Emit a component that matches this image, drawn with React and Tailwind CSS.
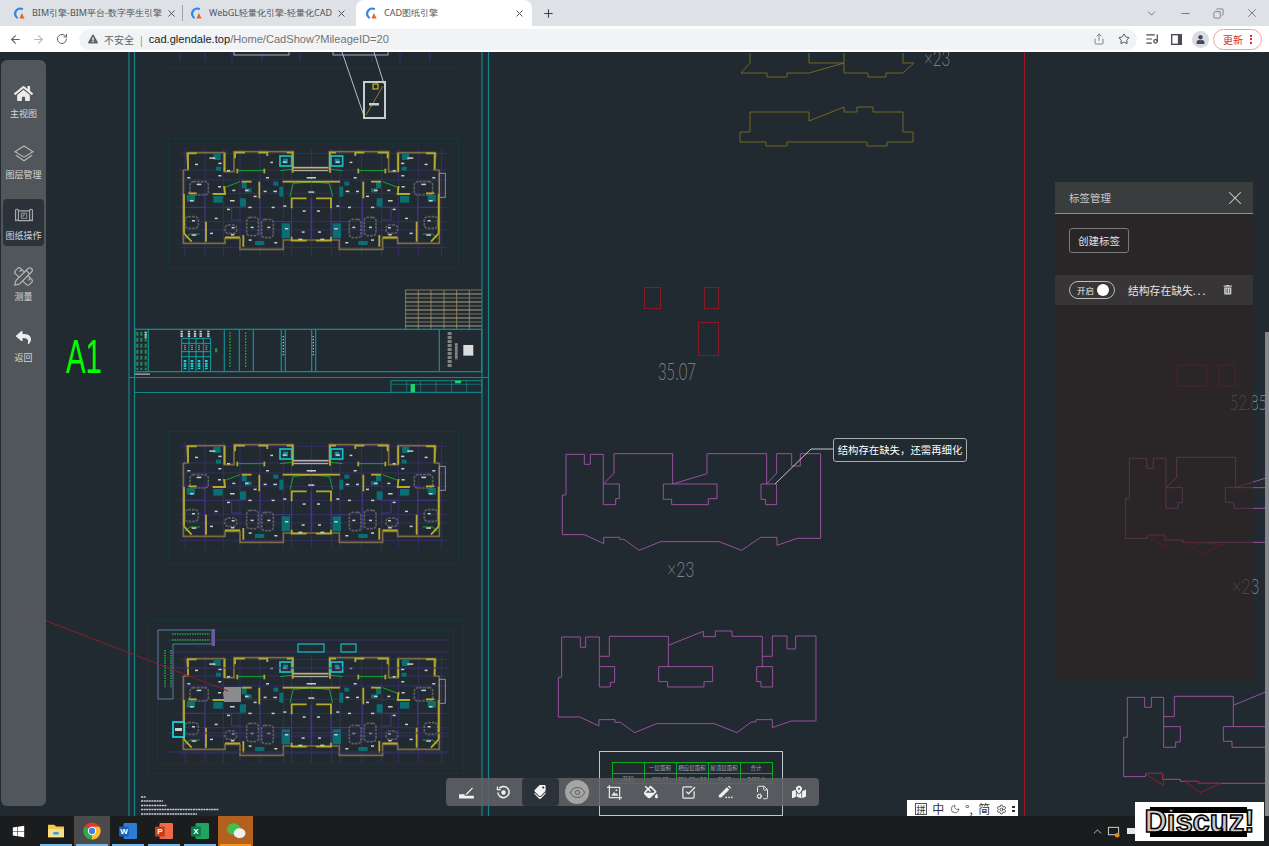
import { ArrowLeft, ArrowRight, RotateCw, Star, ChevronDown, ChevronUp, Minus, X, Copy, Plus, ListMusic, PencilRuler, SquareCheckBig, FileCog, Eye, Share, Moon, Settings } from 'lucide-react';
import { FaHome, FaReply, FaTags, FaFillDrip, FaMapMarkedAlt, FaTrashAlt, FaExclamationTriangle, FaUser, FaWindows } from 'react-icons/fa';

const cjk = '"Noto Sans CJK SC", "Liberation Sans", sans-serif';

// floor plan data, left half only, mirrored around x = 1088
const gridX = [165, 225, 280, 330, 390, 460, 485, 545, 605, 630, 695, 755, 805, 865, 935];
const gridY = [70, 120, 150, 190, 232, 275, 300, 352];
const brown = ['170,68 285,68 285,125 312,125 312,65 490,65 490,115 544,115', '160,120 175,120 170,68', '160,120 160,340 285,340 285,325 330,325 330,358 460,358 460,330 544,330'];
const walls = ['225,190 225,340', '305,232 305,270 335,270', '390,205 390,320', '485,235 485,320', '545,205 545,330', '285,232 340,232', '430,275 485,275', '160,232 225,232'];
const yellow = [
  '174,118 174,70 200,70', '283,70 283,125', '315,85 315,68 345,68', '385,68 412,68 412,78', '470,68 488,68 488,128',
  '162,192 162,310', '162,310 185,335', '248,192 285,192 282,168', '175,190 200,190', '228,275 228,335',
  '388,155 388,205', '335,155 365,155', '458,155 544,155', '485,235 485,205 530,205', '285,322 330,322',
  '322,116 322,130', '403,116 403,130', '485,320 485,332 530,332', '340,315 340,350',
];
const teal = [[250, 72, 22, 18], [258, 110, 15, 12], [170, 195, 25, 20], [250, 198, 28, 20], [335, 155, 15, 20], [330, 205, 18, 25], [345, 175, 20, 12], [430, 155, 15, 12], [448, 170, 12, 30], [455, 280, 25, 45], [375, 333, 28, 12]];
const green = ['285,195 285,172 330,155', '480,200 490,160 544,156', '325,122 400,122', '165,325 180,312 210,312', '450,122 485,118'];
const furniture = [[180, 155, 55, 40], [350, 262, 35, 55], [395, 268, 35, 55], [285, 285, 35, 25], [165, 260, 40, 35]];
const labels = [[195, 101, 9], [238, 82, 18], [265, 98, 10], [291, 120, 9], [421, 95, 8], [458, 94, 12], [265, 135, 9], [172, 141, 9], [200, 161, 14], [264, 168, 9], [307, 179, 9], [345, 179, 11], [401, 182, 9], [430, 182, 11], [371, 197, 9], [300, 210, 14], [355, 230, 10], [291, 236, 9], [425, 230, 9], [460, 226, 9], [518, 241, 9], [180, 210, 11], [254, 263, 9], [186, 270, 9], [305, 291, 9], [362, 290, 9], [412, 290, 9], [515, 304, 9], [356, 328, 9], [433, 336, 9], [303, 312, 10], [240, 308, 9], [185, 313, 14], [408, 141, 9], [530, 141, 16], [535, 184, 9], [465, 294, 10], [505, 326, 12]];

function PlanHalf() {
  return (
    <g>
      {walls.map(p => <polyline key={p} points={p} fill="none" stroke="#43368a" strokeWidth="3" />)}
      {brown.map(p => <polyline key={p} points={p} fill="none" stroke="#7d6c42" strokeWidth="5" />)}
      {teal.map(([x, y, w, h]) => <rect key={`${x}-${y}`} x={x} y={y} width={w} height={h} fill="#0b6f72" />)}
      {furniture.map(([x, y, w, h]) => <rect key={`${x}-${y}`} x={x} y={y} width={w} height={h} rx="10" fill="none" stroke="#5d5f61" strokeWidth="5" strokeDasharray="8 3" />)}
      {green.map(p => <polyline key={p} points={p} fill="none" stroke="#16a32e" strokeWidth="3" />)}
      {yellow.map(p => <polyline key={p} points={p} fill="none" stroke="#b5aa2c" strokeWidth="5.5" />)}
      <rect x="450" y="78" width="35" height="30" fill="none" stroke="#12c4c4" strokeWidth="5" />
      <rect x="460" y="86" width="14" height="14" fill="#0b8f92" />
      {labels.map(([x, y, w]) => <rect key={`${x}-${y}`} x={x} y={y} width={w} height="4.5" fill="#c9cdd0" />)}
    </g>
  );
}

function FloorPlan({ dy }) {
  return (
    <g transform={`translate(130 ${130 + dy}) scale(0.3333)`}>
      {gridX.map(x => <line key={x} x1={x} x2={x} y1="55" y2="380" stroke="#3b2f70" strokeWidth="2.5" />)}
      {gridY.map(y => <line key={y} y1={y} y2={y} x1="148" x2="952" stroke="#3b2f70" strokeWidth="2.5" />)}
      <PlanHalf />
      <g transform="translate(1088 0) scale(-1 1)"><PlanHalf /></g>
      <polyline points="490,112 595,112" stroke="#c4c7c9" strokeWidth="3" />
      <polyline points="490,122 595,122" stroke="#c4c7c9" strokeWidth="3" />
      <rect x="928" y="130" width="18" height="72" fill="none" stroke="#8b8fa8" strokeWidth="3" />
    </g>
  );
}

// title block of the sheet, in the same coords as FloorPlan
function TitleBlock() {
  const cols = [55, 283, 328, 370, 454, 466, 545, 557, 928];
  const tableX = [827, 865, 903, 942, 980, 1018];
  const tableY = [480, 492, 504, 516, 528, 540, 552, 564, 576, 588];
  return (
    <g transform="translate(130 130) scale(0.3333)">
      {tableX.map(x => <line key={x} x1={x} x2={x} y1="480" y2="598" stroke="#8a7a50" strokeWidth="3" />)}
      {tableY.map((y, i) => <line key={y} x1="827" x2="1055" y1={y} y2={y} stroke={i % 2 ? '#a9a48e' : '#8a7a50'} strokeWidth="3" />)}
      <rect x="15" y="598" width="1040" height="127" fill="none" stroke="#12888c" strokeWidth="4" />
      {cols.map(x => <line key={x} x1={x} x2={x} y1="598" y2="725" stroke="#12888c" strokeWidth="4" />)}
      {[155, 177, 198, 220, 242].map(x => <line key={x} x1={x} x2={x} y1="625" y2="725" stroke="#12a3a8" strokeWidth="3" />)}
      {[625, 640, 665, 680].map(y => <line key={y} x1="155" x2="242" y1={y} y2={y} stroke="#12a3a8" strokeWidth="3" />)}
      {[165, 186, 207, 229].map(x => <line key={x} x1={x} x2={x} y1="690" y2="718" stroke="#14d6dc" strokeWidth="8" strokeDasharray="6 2" />)}
      {[155, 177, 195, 212, 235].map(x => <line key={x} x1={x} x2={x} y1="602" y2="622" stroke="#c9cdd0" strokeWidth="7" strokeDasharray="5 2" />)}
      {[165, 186, 207, 229].map(x => <line key={x} x1={x} x2={x} y1="645" y2="660" stroke="#5f8f92" strokeWidth="6" strokeDasharray="4 2" />)}
      {[300, 347].map(x => <line key={x} x1={x} x2={x} y1="606" y2="711" stroke="#159c38" strokeWidth="4" strokeDasharray="6 3" />)}
      <rect x="255" y="655" width="7" height="12" fill="#159c38" />
      {[22, 34, 47].map(x => <line key={x} x1={x} x2={x} y1="605" y2="720" stroke="#1c8f58" strokeWidth="6" strokeDasharray="12 6" />)}
      <line x1="47" x2="47" y1="605" y2="625" stroke="#c9cdd0" strokeWidth="6" strokeDasharray="5 2" />
      {[460, 550].map(x => <line key={x} x1={x} x2={x} y1="618" y2="678" stroke="#b9bdc0" strokeWidth="4" strokeDasharray="4 5" />)}
      <line x1="959" x2="959" y1="606" y2="714" stroke="#7f8487" strokeWidth="12" strokeDasharray="9 3" />
      <line x1="979" x2="979" y1="640" y2="688" stroke="#8d9193" strokeWidth="8" strokeDasharray="7 2" />
      <rect x="1000" y="645" width="30" height="32" fill="#d9dbdd" />
      <rect x="15" y="730" width="45" height="5" fill="#8f9397" />
      {/* next sheet title */}
      <rect x="783" y="752" width="272" height="35" fill="none" stroke="#12888c" strokeWidth="3" />
      {[830, 872, 918, 965, 1010].map(x => <line key={x} x1={x} x2={x} y1="752" y2="787" stroke="#12888c" strokeWidth="2" />)}
      <line x1="783" x2="1055" y1="763" y2="763" stroke="#12888c" strokeWidth="2" />
      <rect x="842" y="762" width="13" height="25" fill="#1ad66a" />
      <rect x="975" y="752" width="18" height="8" fill="#1ad66a" />
    </g>
  );
}

function CadText({ x, y, size = 24, sx = 0.62, children }) {
  return <text transform={`translate(${x} ${y}) scale(${sx} 1)`} fontSize={size}>{children}</text>;
}

function CadCanvas() {
  return (
    <svg viewBox="0 52 1269 764" className="absolute inset-0 w-full h-full">
      {/* sheets */}
      <g stroke="#12888c" strokeWidth="1.2" fill="none">
        <line x1="129" x2="129" y1="52" y2="816" />
        <line x1="134.5" x2="134.5" y1="52" y2="816" />
        <line x1="482" x2="482" y1="52" y2="816" />
        <line x1="488.5" x2="488.5" y1="52" y2="816" />
        <line x1="129" x2="489" y1="377.5" y2="377.5" />
        <line x1="134" x2="482" y1="392.5" y2="392.5" />
      </g>
      <g stroke="#17353a" fill="none">
        <path d="M165 52V67.5H458V52" />
        <rect x="168.5" y="138.5" width="290" height="129" />
        <rect x="168.5" y="431.5" width="290" height="132" />
        <rect x="147.5" y="620.5" width="316" height="153" />
        <rect x="157.5" y="630.5" width="296" height="133" />
      </g>
      {[180, 205, 232, 262, 300, 340, 372, 400, 430].map(x => <line key={x} x1={x} x2={x} y1="52" y2="62" stroke="#3b2f70" />)}
      <rect x="234" y="50" width="55" height="5" fill="none" stroke="#a9adb0" />
      <rect x="333" y="50" width="55" height="5" fill="none" stroke="#a9adb0" />
      <path d="M342 52L364 116M374 52L384 84" stroke="#b9bdc0" fill="none" />
      <rect x="364" y="82" width="21" height="36" fill="none" stroke="#c9cccf" strokeWidth="2" />
      <path d="M366 115L383 86" stroke="#8a7a30" />
      <rect x="373" y="84" width="5" height="5" fill="none" stroke="#e0d418" />
      <rect x="369" y="103" width="10" height="2.5" fill="#c9cdd0" />

      <FloorPlan dy={0} />
      <FloorPlan dy={293} />
      <FloorPlan dy={506} />
      <TitleBlock />

      {/* third plan extras */}
      {[640, 652, 668, 733, 752].map(y => <line key={y} x1="168" x2="449" y1={y} y2={y} stroke="#3b2f70" />)}
      <path d="M158 630H212V644H173V699H158Z" fill="none" stroke="#5d7aa0" />
      <path d="M172 634H210M172 640H210M165 650V688M171 650V688" stroke="#1f8a3a" strokeWidth="2" strokeDasharray="1.5 1" fill="none" />
      <rect x="212" y="629" width="3" height="17" fill="#6a5aa0" />
      <rect x="298" y="644" width="26" height="8" fill="none" stroke="#12b5b5" strokeWidth="1.3" />
      <rect x="341" y="644" width="15" height="8" fill="none" stroke="#12b5b5" strokeWidth="1.3" />
      <rect x="224" y="687" width="17" height="15" fill="#8a8b8d" />
      <rect x="173" y="722" width="11" height="15" fill="#212931" stroke="#12e6f0" strokeWidth="1.6" />
      <rect x="175" y="728" width="7" height="3" fill="#c9cdd0" />
      <line x1="0" x2="228" y1="603" y2="691" stroke="#8a1f2a" />
      {/* notes */}
      <g stroke="#c9cdd0" strokeWidth="1.3" strokeDasharray="2 0.6">
        <line x1="141" x2="146" y1="797" y2="797" />
        <line x1="141" x2="163" y1="801" y2="801" />
        <line x1="141" x2="167" y1="805.5" y2="805.5" />
        <line x1="141" x2="219" y1="809.5" y2="809.5" />
        <line x1="141" x2="197" y1="814" y2="814" />
      </g>

      <text transform="translate(66 373) scale(0.6 1)" fontFamily="Liberation Sans" fontSize="49" fill="#00ff00">A1</text>

      {/* olive outlines */}
      <g fill="none" stroke="#6e6a22">
        <path d="M750 53V63L741 73H767V77H787V73H809L844 63V73H868V77H886V73H903L914 63H903V53M809 53V63H844V53" />
        <path d="M750 112H809V121L844 107V112H857V107H873V112H903V132H913V142H887V146H867V142H787V146H766V142H740V132H750Z" />
      </g>
      <g fill="#7b8087" fontFamily="Lato, sans-serif" fontWeight="300">
        <CadText x={924} y={66} size={21} sx={0.72}>×23</CadText>
        <CadText x={658} y={380}>35.07</CadText>
        <CadText x={667} y={577} size={22} sx={0.72}>×23</CadText>
        <CadText x={1230} y={410} size={22} sx={0.66}>52.85</CadText>
        <CadText x={1232} y={594} size={22} sx={0.72}>×23</CadText>
      </g>
      <g fill="none" stroke="#861b26">
        <rect x="644.5" y="287.5" width="16" height="21" />
        <rect x="704.5" y="287.5" width="14" height="21" />
        <rect x="698.5" y="322.5" width="20" height="33" />
        <rect x="1177" y="365" width="30" height="21" />
        <rect x="1219" y="365" width="16" height="21" />
      </g>
      <line x1="1024.5" x2="1024.5" y1="52" y2="816" stroke="#a01525" />

      {/* magenta outlines */}
      <g transform="translate(550 430) scale(0.3333)" fill="none" stroke="#9a509e" strokeWidth="3">
        <path d="M48 73H103V103H121V73H160V162L192 130V71H368V162L471 131V71H650V162L680 130V71H725V108H751V71H812V325H742L681 346V322H632L575 361L507 335H332L267 361L222 328H209V322H161V341L103 314H37V195H48Z" />
        <path d="M160 162H208V206H197V224H160ZM340 162H501V206H475V224H365V208H340ZM633 162H680V224H647V208H633Z" />
        <path d="M35 621H91V652H107V621H148V679H178V619H355V646L460 604V620H496V603H546V619H637V679H667V618H711V657H737V618H798V873H724L667 893V869H618V876H604L561 908L493 881H320L254 908L211 877H195V869H147V888L89 861H25V742H35Z" />
        <path d="M148 679V771H181V757H194V710H148M355 646V710M326 710H488V755H462V771H353V755H326ZM637 679V710M620 710H668V771H633V755H620Z" />
      </g>
      <g transform="translate(1020 340) scale(0.3333)" fill="none" stroke="#9a509e" strokeWidth="3">
        <path d="M735 415L647 443V352H470V412L438 443V355H400V385H380V355H328V475H317V595H382V585H434V600H488V607H735M438 443V505H474V488H487V443ZM616 443H735M616 443V487H642V505H735" />
        <path d="M735 1057L640 1096V1069H463V1130H431V1072H394V1102H374V1072H322V1192H311V1310H376L378 1300H428V1318H481V1324H535V1330H735M431 1130V1222H467V1206H481V1160H431M640 1096V1160M610 1160H735M610 1160V1204H636V1222H735" />
        <path d="M382 585L438 622V585ZM500 607L545 642L610 613ZM376 1301L431 1337L428 1300ZM495 1324L540 1358L604 1330H535V1324Z" stroke="#a01525" />
      </g>
      <path d="M775 484L811 449H833" fill="none" stroke="#c4c7c9" />

      {/* area table */}
      <rect x="599.5" y="751.5" width="183" height="64" fill="none" stroke="#c4c7c9" />
      <g fill="none" stroke="#0fa81e">
        <rect x="612.5" y="762.5" width="160" height="21" />
        <path d="M612 773.5H773M644.5 762V784M676.5 762V784M708.5 762V784M740.5 762V784" />
      </g>
      <g fontFamily={cjk} fontSize="5.5" fill="#a9adb0" textAnchor="middle">
        <text x="660" y="770">一层面积</text>
        <text x="692" y="770">相应层面积</text>
        <text x="724" y="770">屋顶层面积</text>
        <text x="756" y="770">合计</text>
        <text x="628" y="781">36层</text>
        <text x="660" y="781">351.07</text>
        <text x="692" y="781">351.07×23</text>
        <text x="724" y="781">35.07</text>
        <text x="756" y="781">8460.4</text>
      </g>
    </svg>
  );
}

function Favicon() {
  return (
    <svg viewBox="0 0 14 14" className="w-[13px] h-[13px] shrink-0">
      <path d="M10.5 2.5A5.2 5.2 0 1 0 5 12" fill="none" stroke="#2f86e8" strokeWidth="2.4" />
      <path d="M7 12.5L9.5 6.5L12.5 12.5Z" fill="#e8622a" />
    </svg>
  );
}

function Tab({ title, active, className }) {
  return (
    <div className={`relative h-full flex items-center ${active ? 'bg-white rounded-t-lg' : ''} ${className}`}>
      <Favicon />
      <span className="ml-[6px] flex-1 overflow-hidden whitespace-nowrap text-[9px] text-[#50555a]">{title}</span>
      <X size={11} strokeWidth={2} className="ml-[4px] text-[#45494d] shrink-0" />
    </div>
  );
}

function BrowserChrome() {
  return (
    <>
      <div className="h-[26px] bg-[#dee1e6] flex items-stretch shrink-0">
        <Tab title="BIM引擎-BIM平台-数字孪生引擎" className="ml-[13px] w-[164px]" />
        <div className="w-px h-[16px] mt-[5px] ml-[5px] bg-[#9aa0a6]" />
        <Tab title="WebGL轻量化引擎-轻量化CAD" className="ml-[7px] w-[157px]" />
        <Tab title="CAD图纸引擎" active className="ml-[9px] w-[176px] pl-[9px] pr-[7px]" />
        <Plus size={13} strokeWidth={2} className="ml-[10px] mt-[7px] text-[#3c4043]" />
        <div className="flex-1" />
        <div className="flex items-center text-[#5f6368] gap-[21px] pr-[10px]">
          <ChevronDown size={13} strokeWidth={1.5} />
          <Minus size={13} strokeWidth={1.5} />
          <Copy size={11} strokeWidth={1.5} className="-scale-x-100" />
          <X size={14} strokeWidth={1.3} />
        </div>
      </div>
      <div className="h-[26px] bg-white flex items-center shrink-0 relative">
        <ArrowLeft size={13} strokeWidth={2} className="ml-[9px] text-[#5f6368]" />
        <ArrowRight size={13} strokeWidth={2} className="ml-[10px] text-[#b4b7bb]" />
        <RotateCw size={12} strokeWidth={2} className="ml-[11px] text-[#5f6368]" />
        <div className="ml-[11px] w-[1058px] h-[21px] rounded-full bg-[#f1f3f4] flex items-center pl-[9px] pr-[7px] text-[11.1px] whitespace-nowrap" style={{ fontFamily: cjk }}>
          <FaExclamationTriangle size={10} className="text-[#5f6368]" />
          <span className="ml-[6px] text-[10px] text-[#5f6368]">不安全</span>
          <span className="mx-[6px] text-[#80868b] text-[10px]">|</span>
          <span className="text-[#202124] font-['Liberation_Sans'] ">cad.glendale.top</span>
          <span className="text-[#70757a] font-['Liberation_Sans']">/Home/CadShow?MileageID=20</span>
          <div className="flex-1" />
          <Share size={12} className="text-[#7f8488]" />
          <Star size={12} strokeWidth={2} className="ml-[13px] text-[#4c5054]" />
        </div>
        <ListMusic size={14} className="ml-[8px] text-[#45494d]" />
        <svg viewBox="0 0 12 12" className="ml-[12px] w-[11px] h-[11px]">
          <rect x="0" y="0" width="12" height="12" fill="#4a4e52" />
          <rect x="1.5" y="1.5" width="6" height="9" fill="#fff" />
        </svg>
        <div className="ml-[10px] w-[17px] h-[17px] rounded-full bg-[#dadce0] flex items-center justify-center">
          <FaUser size={9} className="text-[#3f4a5f]" />
        </div>
        <div className="ml-[4px] w-[49px] h-[21px] rounded-full border border-[#e8a49c] flex items-center pl-[9px] text-[10px] text-[#d93025]" style={{ fontFamily: cjk }}>
          更新
          <span className="ml-[7px] flex flex-col gap-[1.5px]">
            <i className="block w-[2px] h-[2px] bg-[#d93025]" />
            <i className="block w-[2px] h-[2px] bg-[#d93025]" />
            <i className="block w-[2px] h-[2px] bg-[#d93025]" />
          </span>
        </div>
      </div>
    </>
  );
}

function LayersIcon() {
  return (
    <svg viewBox="0 0 24 20" className="w-[22px] h-[18px]" fill="none" stroke="#b4b6b8" strokeWidth="1.3">
      <path d="M12 1L22 7.5L12 13.5L2 7.5Z" />
      <path d="M3 11.5L12 17.5L21 11.5" />
    </svg>
  );
}

function SheetIcon() {
  return (
    <svg viewBox="0 0 20 16" className="w-[20px] h-[15px]" fill="none" stroke="#a8abae" strokeWidth="1.2">
      <path d="M1 2.5C1 1 4 1 4 2.5V14C4 12.5 1 12.5 1 14ZM16 2.5C16 1 19 1 19 2.5V14C19 12.5 16 12.5 16 14ZM4 3H16M4 13.5H16" />
      <path d="M7 5.5H13V11H7ZM10 5.5V8.5H7" strokeWidth="0.9" />
    </svg>
  );
}

const sideItems = [
  { label: '主视图', icon: <FaHome size={19} className="text-[#ececec]" /> },
  { label: '图层管理', icon: <LayersIcon /> },
  { label: '图纸操作', icon: <SheetIcon />, active: true },
  { label: '测量', icon: <PencilRuler size={21} strokeWidth={1.4} className="text-[#b4b6b8]" /> },
  { label: '返回', icon: <FaReply size={15} className="text-[#ececec]" /> },
];

function Sidebar() {
  return (
    <div className="absolute left-[1px] top-[8px] w-[45px] h-[746px] rounded-md bg-[#575b5f]/90 flex flex-col items-center gap-[14px] pt-[17px]" style={{ fontFamily: cjk }}>
      {sideItems.map(item => (
        <div key={item.label} className={`w-[41px] h-[47px] rounded flex flex-col items-center ${item.active ? 'bg-[#2b323a]' : ''}`}>
          <div className="h-[32px] flex items-center justify-center">{item.icon}</div>
          <span className="text-[9px] leading-[9px] text-[#d5d6d7] whitespace-nowrap">{item.label}</span>
        </div>
      ))}
    </div>
  );
}

function TagPanel() {
  return (
    <div className="absolute left-[1055px] top-[130px] w-[198px] h-[498px] flex flex-col bg-[#302524]/65" style={{ fontFamily: cjk }}>
      <div className="h-[32px] flex items-center justify-between pl-[14px] pr-[7px] bg-[#3a3d3d] border-b border-[#8d8f90] text-[10.5px] text-[#c8c9c9]">
        标签管理
        <X size={22} strokeWidth={1.1} className="text-[#d2d3d3]" />
      </div>
      <button className="ml-[14px] mt-[14px] w-[60px] h-[25px] rounded-[3px] border border-[#77797a] text-[10.5px] text-[#e2e2e2]">创建标签</button>
      <div className="mt-[22px] h-[30px] bg-[#383536] flex items-center pl-[14px]">
        <div className="w-[46px] h-[18px] rounded-full border border-[#bcbcbc] flex items-center pl-[7px] text-[8.5px] text-[#eeeeee]">
          开启
          <span className="ml-[3px] w-[12px] h-[12px] rounded-full bg-white" />
        </div>
        <span className="ml-[13px] w-[83px] text-[10.8px] text-[#e4e4e4] whitespace-nowrap">结构存在缺失<span className="tracking-[1.8px]">...</span></span>
        <FaTrashAlt size={9.5} className="ml-[12px] text-[#cfcfcf]" />
      </div>
    </div>
  );
}

function PenGroundIcon() {
  return (
    <svg viewBox="0 0 16 14" className="w-[15px] h-[13px]" fill="#f2f2f2">
      <path d="M0 9H6V10.5H16V13.5H0Z" />
      <path d="M7 9L14 1.5L15 2.5L8.5 9.5Z" />
    </svg>
  );
}

function HistoryIcon() {
  return (
    <svg viewBox="0 0 16 16" className="w-[15px] h-[15px]" fill="none" stroke="#f2f2f2" strokeWidth="1.6">
      <path d="M3.5 3.5A6 6 0 1 1 2 8" />
      <path d="M1.5 1.5V5H5" strokeWidth="1.3" />
      <circle cx="8" cy="8" r="1.6" fill="#f2f2f2" />
    </svg>
  );
}

function CropImageIcon() {
  return (
    <svg viewBox="0 0 16 16" className="w-[15px] h-[15px]" fill="none" stroke="#e6e6e6" strokeWidth="1.3">
      <path d="M2.5 0V13.5H16M0 2.5H13.5V16" />
      <path d="M4.5 11.5L7.5 7.5L9.5 9.5L10.5 8.5L12 11.5Z" fill="#e6e6e6" stroke="none" />
      <circle cx="10" cy="5.5" r="1" fill="#e6e6e6" stroke="none" />
    </svg>
  );
}

function PenDotsIcon() {
  return (
    <svg viewBox="0 0 16 15" className="w-[15px] h-[14px]" fill="#f0f0f0">
      <path d="M1 11L9.5 2.5L12 5L3.5 13.5H1Z" />
      <path d="M10.5 1.5L11.5 0.5L14 3L13 4Z" />
      <rect x="8" y="12.5" width="1.6" height="1.6" />
      <rect x="11" y="12.5" width="1.6" height="1.6" />
      <rect x="14" y="12.5" width="1.6" height="1.6" />
    </svg>
  );
}

function BottomToolbar() {
  const cell = 'w-[37px] h-full flex items-center justify-center';
  return (
    <div className="absolute left-[446px] top-[726px] w-[373px] h-[28px] rounded bg-[#606366]/85 flex items-stretch px-[1.5px]">
      <div className={cell}><PenGroundIcon /></div>
      <div className={cell}><HistoryIcon /></div>
      <div className={`${cell} bg-[#2b323a] rounded`}><FaTags size={14} className="text-[#f2f2f2] rotate-90" /></div>
      <div className={cell}>
        <div className="w-[24px] h-[24px] rounded-full bg-[#a5a5a5] flex items-center justify-center">
          <Eye size={17} strokeWidth={1.3} className="text-[#55585b]" />
        </div>
      </div>
      <div className={cell}><CropImageIcon /></div>
      <div className={cell}><FaFillDrip size={14} className="text-[#f2f2f2]" /></div>
      <div className={cell}><SquareCheckBig size={15} strokeWidth={2} className="text-[#ececec]" /></div>
      <div className={cell}><PenDotsIcon /></div>
      <div className={cell}><FileCog size={15} strokeWidth={1.6} className="text-[#e6e6e6]" /></div>
      <div className={cell}><FaMapMarkedAlt size={14} className="text-[#f2f2f2]" /></div>
    </div>
  );
}

function ChromeLogo() {
  return (
    <svg viewBox="0 0 20 20" className="w-[18px] h-[18px]">
      <circle cx="10" cy="10" r="9.5" fill="#e33b2e" />
      <path d="M10 10L1.8 5.2A9.5 9.5 0 0 0 10 19.5Z" fill="#2da94f" />
      <path d="M10 10V19.5A9.5 9.5 0 0 0 18.2 5.2L10 5.2Z" fill="#fbc02d" />
      <circle cx="10" cy="10" r="4.6" fill="#fff" />
      <circle cx="10" cy="10" r="3.5" fill="#3b82f0" />
    </svg>
  );
}

function OfficeIcon({ letter, dark, light }) {
  return (
    <svg viewBox="0 0 20 20" className="w-[18px] h-[18px]">
      <rect x="5" y="1" width="15" height="18" rx="1.5" fill={light} />
      <rect x="0" y="5" width="11" height="11" rx="1" fill={dark} />
      <text x="5.5" y="13.5" textAnchor="middle" fontSize="9" fontWeight="700" fontFamily="Liberation Sans" fill="#fff">{letter}</text>
    </svg>
  );
}

function TaskItem({ children, w, active, orange, line = true }) {
  return (
    <div className={`relative h-full flex items-center justify-center ${w} ${active ? 'bg-[#4b4b4b]' : ''} ${orange ? 'bg-[#b4611f]' : ''}`}>
      {children}
      {line && <div className={`absolute bottom-0 left-[2px] right-[2px] h-[2px] ${orange ? 'bg-[#f7941d] left-0 right-0' : 'bg-[#76b9ed]'}`} />}
    </div>
  );
}

function Taskbar() {
  return (
    <div className="h-[30px] bg-[#1b1c1d] flex items-stretch shrink-0 relative">
      <div className="w-[36px] flex items-center justify-center pl-[1px]"><FaWindows size={13} className="text-white" /></div>
      <div className="ml-[2px] flex h-full">
        <TaskItem w="w-[36px]">
          <svg viewBox="0 0 20 18" className="w-[18px] h-[16px]">
            <path d="M1 2H8L10 4H19V16H1Z" fill="#f2c94c" />
            <rect x="1" y="7" width="18" height="9" fill="#fbe08a" />
            <rect x="7" y="10" width="6" height="3" fill="#3b9be0" />
          </svg>
        </TaskItem>
        <TaskItem w="w-[36px]" active><ChromeLogo /></TaskItem>
        <TaskItem w="w-[36px]"><OfficeIcon letter="W" dark="#1a5fb4" light="#2b7cd3" /></TaskItem>
        <TaskItem w="w-[36px]"><OfficeIcon letter="P" dark="#c43e1c" light="#ed6c47" /></TaskItem>
        <TaskItem w="w-[36px]"><OfficeIcon letter="X" dark="#107c41" light="#21a366" /></TaskItem>
        <TaskItem w="w-[35px]" orange>
          <svg viewBox="0 0 22 20" className="w-[20px] h-[18px]">
            <ellipse cx="8.5" cy="8" rx="7.5" ry="6.5" fill="#3fc04b" />
            <ellipse cx="15" cy="12.5" rx="6.5" ry="5.5" fill="#f0f0f0" />
          </svg>
        </TaskItem>
      </div>
      <div className="flex-1" />
      <div className="flex items-center pr-[133px] text-[#d8d8d8]">
        <ChevronUp size={13} strokeWidth={1.5} />
        <svg viewBox="0 0 14 14" className="ml-[3px] w-[13px] h-[13px]" fill="none" stroke="#d8d8d8">
          <rect x="1.5" y="2.5" width="11" height="8" />
          <circle cx="11" cy="11" r="2.5" fill="#e8891c" stroke="none" />
        </svg>
        <div className="ml-[7px] w-[9px] h-[6px] bg-[#e6e6e6]" />
      </div>
    </div>
  );
}

function ImeBar() {
  return (
    <div className="absolute left-[907px] top-[748px] w-[111px] h-[18px] bg-white flex items-center justify-between pl-[8px] pr-[3px] text-[12px] text-[#333] whitespace-nowrap" style={{ fontFamily: cjk }}>
      <span className="w-[12px] h-[12px] border border-[#555] flex items-center justify-center text-[9px] leading-none">拼</span>
      <span>中</span>
      <Moon size={10} strokeWidth={1.6} />
      <span>°,</span>
      <span>简</span>
      <Settings size={11} strokeWidth={1.8} />
      <span className="flex flex-col gap-[2px]">
        <i className="block w-[3px] h-[2px] bg-[#333]" />
        <i className="block w-[3px] h-[2px] bg-[#333]" />
      </span>
    </div>
  );
}

function Watermark() {
  return (
    <div className="absolute left-[1135px] top-[802px] w-[129px] h-[39px] bg-white z-10 flex items-center justify-center">
      <div className="absolute left-[15px] right-[17px] top-[5px] h-[6px] bg-black" />
      <div className="absolute left-[15px] right-[17px] bottom-[4px] h-[6px] bg-black" />
      <span className="relative text-[31px] leading-none font-bold text-[#c9c9c9] font-['Liberation_Sans'] [-webkit-text-stroke:1.5px_#000]">Discuz!</span>
    </div>
  );
}

export default function App() {
  return (
    <div className="relative w-[1269px] h-[846px] overflow-hidden flex flex-col bg-[#212931]">
      <BrowserChrome />
      <div className="relative flex-1 overflow-hidden">
        <CadCanvas />
        <div className="absolute right-0 top-[280px] bottom-0 w-[4px] bg-[#85878a]" />
        <Sidebar />
        <TagPanel />
        <div className="absolute left-[833px] top-[386px] w-[134px] h-[24px] rounded-[3px] border border-[#a9adb0] bg-[#212931] flex items-center justify-center text-[10.4px] text-white whitespace-nowrap" style={{ fontFamily: cjk }}>
          结构存在缺失，还需再细化
        </div>
        <BottomToolbar />
        <ImeBar />
      </div>
      <Taskbar />
      <Watermark />
    </div>
  );
}
